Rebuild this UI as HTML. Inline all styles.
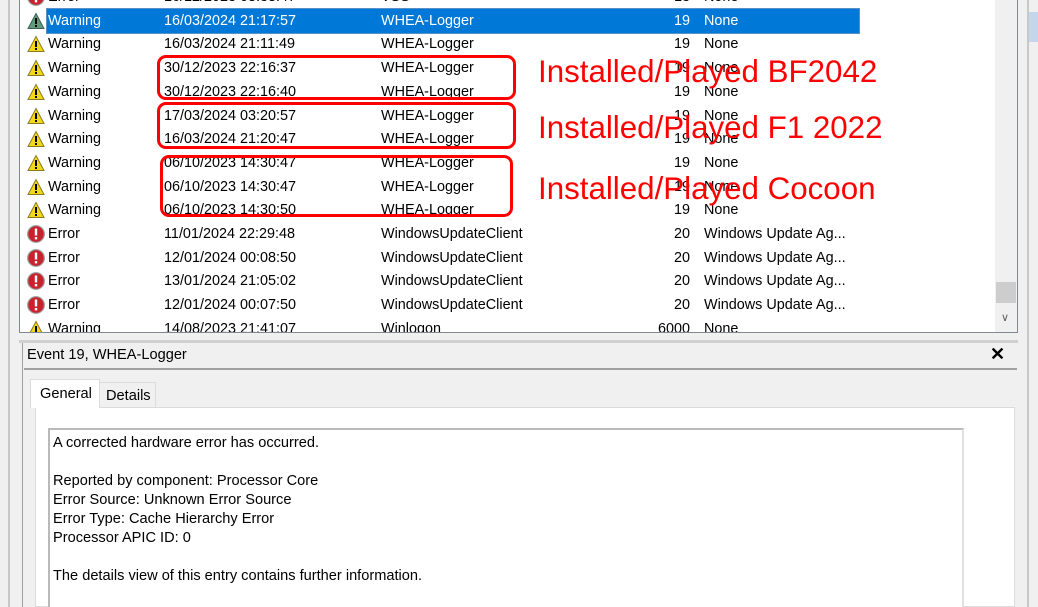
<!DOCTYPE html>
<html><head><meta charset="utf-8"><style>
*{margin:0;padding:0;box-sizing:border-box}
html,body{width:1038px;height:607px;overflow:hidden}
body{background:#f0f0f0;font-family:"Liberation Sans",sans-serif;font-size:14px;color:#000;position:relative}
.abs{position:absolute}
.list{position:absolute;left:19px;top:-2px;width:999px;height:335px;background:#fff;border:1px solid #828790;overflow:hidden}
.row{position:absolute;left:0;height:24px;width:1000px;line-height:24px;font-size:14.4px}
.row span{position:absolute;white-space:nowrap}
.ic{position:absolute;left:7px;top:3px;width:18px;height:18px}
.red{color:#ff0000;font-size:31.3px;position:absolute;left:538px;white-space:nowrap}
.box{position:absolute;border:3px solid #f00;border-radius:9px}
</style></head><body>
<div class="abs" style="left:8px;top:0;width:2px;height:607px;background:#c8c8c8"></div>
<div class="abs" style="left:1027px;top:0;width:2px;height:607px;background:#c8c8c8"></div>
<div class="abs" style="left:1029px;top:12px;width:9px;height:30px;background:#c5d6ea"></div>
<div class="list">
<div style="position:absolute;left:975px;top:0;width:22px;height:335px;background:#f0f0f0"></div>
<div style="position:absolute;left:976px;top:283px;width:20px;height:21px;background:#cdcdcd"></div>
<div style="position:absolute;left:981px;top:312px;font-size:11px;color:#606060">&#x2228;</div>
<div id="rows"></div>
</div>
<div class="box" style="left:157px;top:55px;width:359px;height:45px"></div>
<div class="box" style="left:157px;top:102px;width:359px;height:47px"></div>
<div class="box" style="left:160px;top:155px;width:353px;height:62px"></div>
<div class="red" style="top:54px">Installed/Played BF2042</div>
<div class="red" style="top:110px">Installed/Played F1 2022</div>
<div class="red" style="top:171px">Installed/Played Cocoon</div>

<div class="abs" style="left:19px;top:340px;width:999px;height:3px;background:#d0d0d0"></div>
<div class="abs" style="left:22px;top:343px;width:1px;height:264px;background:#a0a0a0"></div>
<div class="abs" style="left:27px;top:347px;font-size:14.6px">Event 19, WHEA-Logger</div>
<div class="abs" style="left:990px;top:344px;font-size:18px;font-weight:bold">&#x2715;</div>
<div class="abs" style="left:24px;top:368px;width:993px;height:2px;background:#a0a0a0"></div>
<div class="abs" style="left:35px;top:407px;width:980px;height:200px;background:#fff;border:1px solid #dcdcdc"></div>
<div class="abs" style="left:30px;top:379px;width:70px;height:29px;background:#fff;border:1px solid #dcdcdc;border-bottom:none;padding:6px 0 0 9px;font-size:14.6px">General</div>
<div class="abs" style="left:99px;top:382px;width:57px;height:25px;background:#f0f0f0;border:1px solid #dcdcdc;border-bottom:none;padding:5px 0 0 6px;font-size:14.6px">Details</div>
<div class="abs" style="left:48px;top:428px;width:916px;height:179px;border:2px solid #b9b9b9;border-right-color:#e0e0e0;border-bottom:none;background:#fff;padding:4px 0 0 3px;line-height:19px;font-size:14.6px">
A corrected hardware error has occurred.<br><br>Reported by component: Processor Core<br>Error Source: Unknown Error Source<br>Error Type: Cache Hierarchy Error<br>Processor APIC ID: 0<br><br>The details view of this entry contains further information.
</div>
<script>
var W='<svg class="ic" viewBox="0 0 18 18"><path d="M9 1.5L17 16.5H1Z" fill="#f3d71a" stroke="#8a7a20" stroke-width="1"/><rect x="8" y="6" width="2" height="6" fill="#000"/><rect x="8" y="13" width="2" height="2" fill="#000"/></svg>';
var WS='<svg class="ic" viewBox="0 0 18 18"><path d="M9 1.5L17 16.5H1Z" fill="#5f9a7a" stroke="#3d6050" stroke-width="1"/><rect x="8" y="6" width="2" height="6" fill="#000"/><rect x="8" y="13" width="2" height="2" fill="#000"/></svg>';
var E='<svg class="ic" viewBox="0 0 18 18"><circle cx="9" cy="9" r="8.3" fill="#c8232c" stroke="#999" stroke-width="1.2"/><rect x="7.8" y="3.5" width="2.4" height="7" fill="#fff"/><rect x="7.8" y="12" width="2.4" height="2.4" fill="#fff"/></svg>';
var d=[
[E,'Error','16/12/2023 08:38:47','VSS','13','None'],
[WS,'Warning','16/03/2024 21:17:57','WHEA-Logger','19','None',0,1],
[W,'Warning','16/03/2024 21:11:49','WHEA-Logger','19','None'],
[W,'Warning','30/12/2023 22:16:37','WHEA-Logger','19','None'],
[W,'Warning','30/12/2023 22:16:40','WHEA-Logger','19','None'],
[W,'Warning','17/03/2024 03:20:57','WHEA-Logger','19','None'],
[W,'Warning','16/03/2024 21:20:47','WHEA-Logger','19','None'],
[W,'Warning','06/10/2023 14:30:47','WHEA-Logger','19','None'],
[W,'Warning','06/10/2023 14:30:47','WHEA-Logger','19','None'],
[W,'Warning','06/10/2023 14:30:50','WHEA-Logger','19','None'],
[E,'Error','11/01/2024 22:29:48','WindowsUpdateClient','20','Windows Update Ag...'],
[E,'Error','12/01/2024 00:08:50','WindowsUpdateClient','20','Windows Update Ag...'],
[E,'Error','13/01/2024 21:05:02','WindowsUpdateClient','20','Windows Update Ag...'],
[E,'Error','12/01/2024 00:07:50','WindowsUpdateClient','20','Windows Update Ag...'],
[W,'Warning','14/08/2023 21:41:07','Winlogon','6000','None']];
var h='';
for(var i=0;i<d.length;i++){var r=d[i];var ty=Math.round(-14+i*23.7);
var s=r[7]?'<div style="position:absolute;left:27px;top:0;width:812px;height:24px;background:#0078d7;outline:1px solid #5a8fc8"></div>':'';
var c=r[7]?'color:#fff;':'';
h+='<div class="row" style="top:'+ty+'px">'+s+r[0]+'<span style="left:28px;'+c+'">'+r[1]+'</span><span style="left:144px;'+c+'">'+r[2]+'</span><span style="right:330px;'+c+'">'+r[4]+'</span><span style="left:361px;'+c+'">'+r[3]+'</span><span style="left:684px;'+c+'">'+r[5]+'</span></div>';}
document.getElementById('rows').innerHTML=h;
</script>
</body></html>
